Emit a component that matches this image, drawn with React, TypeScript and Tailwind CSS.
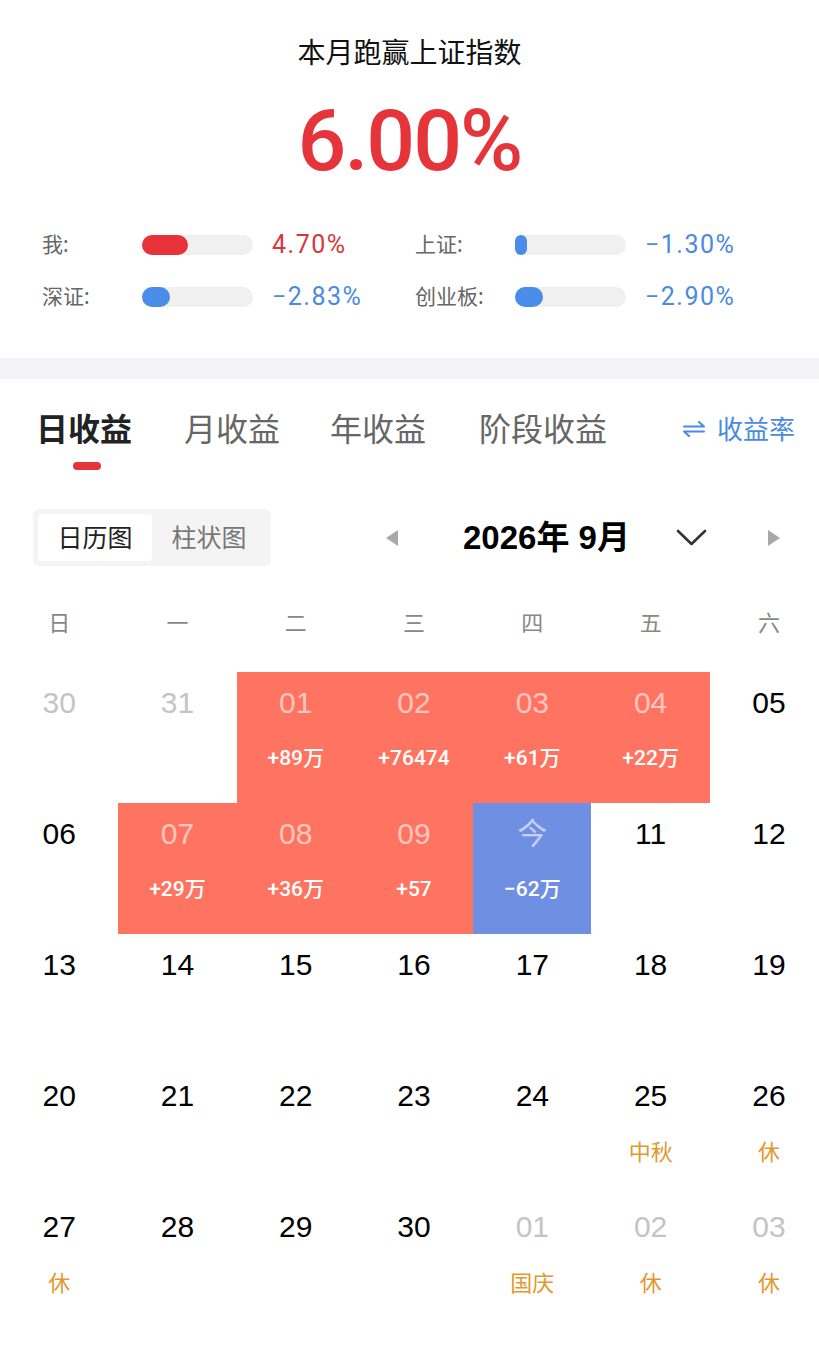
import React from 'react';

const CJK = "font-['Noto_Sans','Noto_Sans_CJK_SC',sans-serif]";
const NUM = "font-['Roboto','Noto_Sans_CJK_SC',sans-serif]";
const DATE = "font-['Liberation_Sans','Noto_Sans_CJK_SC',sans-serif]";

type Stat = {
  label: string;
  fill: number;
  value: string;
  up: boolean;
};

type Day = {
  d: string;
  kind: 'muted' | 'normal' | 'up' | 'down';
  sub?: string;
  holiday?: string;
};

const stats: Stat[][] = [
  [
    { label: '我:', fill: 46, value: '4.70%', up: true },
    { label: '上证:', fill: 12, value: '−1.30%', up: false },
  ],
  [
    { label: '深证:', fill: 28, value: '−2.83%', up: false },
    { label: '创业板:', fill: 28, value: '−2.90%', up: false },
  ],
];

const days: Day[] = [
  { d: '30', kind: 'muted' },
  { d: '31', kind: 'muted' },
  { d: '01', kind: 'up', sub: '+89万' },
  { d: '02', kind: 'up', sub: '+76474' },
  { d: '03', kind: 'up', sub: '+61万' },
  { d: '04', kind: 'up', sub: '+22万' },
  { d: '05', kind: 'normal' },
  { d: '06', kind: 'normal' },
  { d: '07', kind: 'up', sub: '+29万' },
  { d: '08', kind: 'up', sub: '+36万' },
  { d: '09', kind: 'up', sub: '+57' },
  { d: '今', kind: 'down', sub: '−62万' },
  { d: '11', kind: 'normal' },
  { d: '12', kind: 'normal' },
  { d: '13', kind: 'normal' },
  { d: '14', kind: 'normal' },
  { d: '15', kind: 'normal' },
  { d: '16', kind: 'normal' },
  { d: '17', kind: 'normal' },
  { d: '18', kind: 'normal' },
  { d: '19', kind: 'normal' },
  { d: '20', kind: 'normal' },
  { d: '21', kind: 'normal' },
  { d: '22', kind: 'normal' },
  { d: '23', kind: 'normal' },
  { d: '24', kind: 'normal' },
  { d: '25', kind: 'normal', holiday: '中秋' },
  { d: '26', kind: 'normal', holiday: '休' },
  { d: '27', kind: 'normal', holiday: '休' },
  { d: '28', kind: 'normal' },
  { d: '29', kind: 'normal' },
  { d: '30', kind: 'normal' },
  { d: '01', kind: 'muted', holiday: '国庆' },
  { d: '02', kind: 'muted', holiday: '休' },
  { d: '03', kind: 'muted', holiday: '休' },
];

const weekdays = ['日', '一', '二', '三', '四', '五', '六'];

const StatItem = ({ stat }: { stat: Stat }) => (
  <div className="flex items-center">
    <span className={`w-[100px] text-[21px] text-[#666] ${CJK}`}>{stat.label}</span>
    <div className="h-[20px] w-[111px] rounded-full bg-[#f0f0f0]">
      <div
        className={`h-full rounded-full ${stat.up ? 'bg-[#e8323a]' : 'bg-[#4a8de8]'}`}
        style={{ width: stat.fill }}
      />
    </div>
    <span
      className={`ml-[19px] text-[25px] tracking-[1.5px] ${NUM} ${stat.up ? 'text-[#d8363c]' : 'text-[#4a8ae0]'}`}
    >
      {stat.value}
    </span>
  </div>
);

const DayCell = ({ day }: { day: Day }) => {
  const bg =
    day.kind === 'up' ? 'bg-[#fe7461]' : day.kind === 'down' ? 'bg-[#6f8fe2]' : 'bg-white';
  const dateColor =
    day.kind === 'muted'
      ? 'text-[#c4c4c4]'
      : day.kind === 'normal'
        ? 'text-black'
        : 'text-white/60';

  return (
    <div className={`flex h-[131px] flex-col items-center ${bg}`}>
      <span className={`mt-[13px] text-[30px] leading-[36px] ${DATE} ${dateColor}`}>{day.d}</span>
      {day.sub && (
        <span className={`mt-[23px] text-[21px] leading-[28px] font-medium text-white ${NUM}`}>
          {day.sub}
        </span>
      )}
      {day.holiday && (
        <span className={`mt-[23px] text-[22px] leading-[28px] text-[#e3972f] ${CJK}`}>
          {day.holiday}
        </span>
      )}
    </div>
  );
};

export default function App() {
  return (
    <div className={`w-[819px] h-[1346px] overflow-hidden bg-white ${CJK}`}>
      {/* Summary */}
      <section className="flex flex-col items-center pt-[32px] pb-[35px]">
        <h1 className="text-[28px] leading-[40px] text-[#111]">本月跑赢上证指数</h1>
        <div
          className={`mt-[19px] text-[86px] leading-[100px] font-medium tracking-[-2px] text-[#e5343a] ${NUM}`}
        >
          6.00%
        </div>
        <div className="mt-[28px] w-full pl-[42px]">
          {stats.map((row, i) => (
            <div key={i} className="grid h-[52px] grid-cols-[373px_1fr] items-center">
              {row.map((s) => (
                <StatItem key={s.label} stat={s} />
              ))}
            </div>
          ))}
        </div>
      </section>

      <div className="h-[21px] bg-[#f3f3f6]" />

      {/* Tabs */}
      <div className="flex items-center pt-[28px] pl-[36px] pr-[24px]">
        <span className="text-[32px] leading-[44px] font-bold text-[#222]">日收益</span>
        <span className="ml-[52px] text-[32px] leading-[44px] text-[#666]">月收益</span>
        <span className="ml-[50px] text-[32px] leading-[44px] text-[#666]">年收益</span>
        <span className="ml-[53px] text-[32px] leading-[44px] text-[#666]">阶段收益</span>
        <div className="ml-auto flex items-center gap-[12px] text-[26px] text-[#4a8ae0]">
          <svg width="22" height="16" viewBox="0 0 22 16" fill="none" stroke="#4a8ae0" strokeWidth="2" strokeLinecap="round" strokeLinejoin="round">
            <path d="M1 5.5 H21 L16 1" />
            <path d="M21 10.5 H1 L6 15" />
          </svg>
          <span>收益率</span>
        </div>
      </div>
      <div className="ml-[73px] mt-[11px] h-[8px] w-[28px] rounded-full bg-[#e5343a]" />

      {/* Controls */}
      <div className="mt-[39px] flex items-center">
        <div className="ml-[33px] flex h-[57px] w-[238px] items-center rounded-[6px] bg-[#f4f4f4] p-[5px]">
          <div className="flex h-[47px] w-[114px] items-center justify-center rounded-[4px] bg-white text-[25px] text-[#222]">
            日历图
          </div>
          <div className="flex flex-1 items-center justify-center text-[25px] text-[#777]">柱状图</div>
        </div>
        <svg className="ml-[114px]" width="14" height="18" viewBox="0 0 14 18">
          <path d="M13 1 L1 9 L13 17 Z" fill="#a8a8a8" />
        </svg>
        <span className="ml-[64px] w-[170px] whitespace-nowrap text-[33px] font-bold text-black font-['Liberation_Sans','Noto_Sans_CJK_SC',sans-serif]">
          2026年 9月
        </span>
        <svg className="ml-[43px]" width="31" height="17" viewBox="0 0 31 17" fill="none" stroke="#333" strokeWidth="2.6" strokeLinecap="round" strokeLinejoin="round">
          <path d="M2 2 L15.5 15 L29 2" />
        </svg>
        <svg className="ml-[60px]" width="14" height="18" viewBox="0 0 14 18">
          <path d="M1 1 L13 9 L1 17 Z" fill="#a8a8a8" />
        </svg>
      </div>

      {/* Calendar */}
      <div className="mt-[28px] grid grid-cols-[repeat(7,118.3px)]">
        {weekdays.map((w) => (
          <div key={w} className="flex h-[56px] items-center justify-center text-[22px] text-[#888]">
            {w}
          </div>
        ))}
      </div>
      <div className="mt-[22px] grid grid-cols-[repeat(7,118.3px)]">
        {days.map((day, i) => (
          <DayCell key={i} day={day} />
        ))}
      </div>
    </div>
  );
}
